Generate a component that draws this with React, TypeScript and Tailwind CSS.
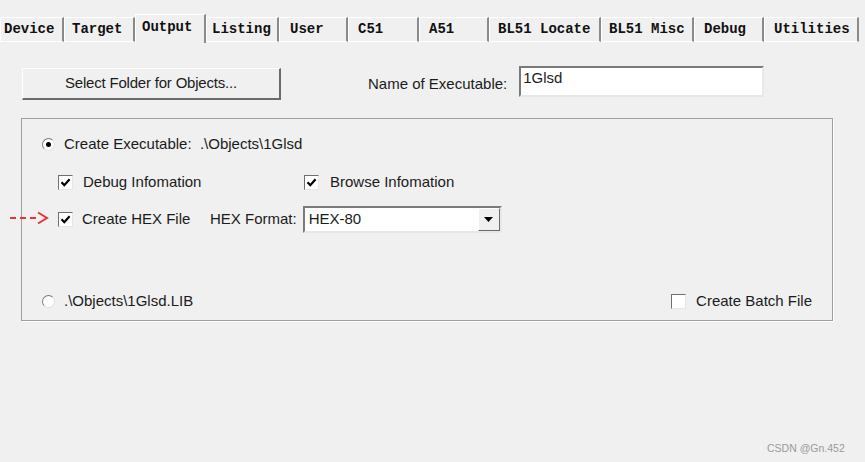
const TABS: Array<{ label: string; w: string; pl: string; active?: boolean }> = [
  { label: 'Device', w: 'w-[64px]', pl: 'pl-[3px]' },
  { label: 'Target', w: 'w-[71px]', pl: 'pl-[7px]' },
  { label: 'Output', w: 'w-[71px]', pl: 'pl-[6px]', active: true },
  { label: 'Listing', w: 'w-[73px]', pl: 'pl-[5px]' },
  { label: 'User', w: 'w-[69px]', pl: 'pl-[10px]' },
  { label: 'C51', w: 'w-[71px]', pl: 'pl-[9px]' },
  { label: 'A51', w: 'w-[70px]', pl: 'pl-[9px]' },
  { label: 'BL51 Locate', w: 'w-[112px]', pl: 'pl-[8px]' },
  { label: 'BL51 Misc', w: 'w-[93px]', pl: 'pl-[7px]' },
  { label: 'Debug', w: 'w-[70px]', pl: 'pl-[9px]' },
  { label: 'Utilities', w: 'w-[95px]', pl: 'pl-[9px]' },
];

function CheckBox({ checked }: { checked: boolean }) {
  return (
    <span className="w-[15px] h-[15px] shrink-0 bg-white border border-t-[#6e6e6e] border-l-[#6e6e6e] border-r-[#e6e6e6] border-b-[#e6e6e6] flex items-center justify-center">
      {checked && (
        <svg width="11" height="11" viewBox="0 0 11 11">
          <path d="M1.5 5.2 L4.3 8.2 L9.6 2.2" fill="none" stroke="#000" strokeWidth={2.2} />
        </svg>
      )}
    </span>
  );
}

function Radio({ checked }: { checked: boolean }) {
  return (
    <span className="w-[13px] h-[13px] shrink-0 rounded-full bg-white border border-t-[#7a7a7a] border-l-[#7a7a7a] border-r-[#e0e0e0] border-b-[#e0e0e0] flex items-center justify-center">
      {checked && <span className="w-[5px] h-[5px] rounded-full bg-black" />}
    </span>
  );
}

export default function App() {
  return (
    <div
      className="relative w-[865px] h-[462px] overflow-hidden bg-[#f0f0f0] text-[15px] text-[#1b1b1b]"
      style={{ fontFamily: '"Liberation Sans", Arial, sans-serif' }}
    >
      {/* Tab strip */}
      <div className="flex items-end h-[42px] pt-[13px]">
        {TABS.map((t) =>
          t.active ? (
            <div
              key={t.label}
              className={`${t.w} ${t.pl} h-[29px] -mb-[1px] pb-[3px] flex items-center bg-[#f0f0f0] border-t border-l border-white border-r-2 border-r-[#8a8a8a] font-bold text-[14px] text-[#111]`}
              style={{ fontFamily: '"Liberation Mono", "Courier New", monospace' }}
            >
              {t.label}
            </div>
          ) : (
            <div
              key={t.label}
              className={`${t.w} ${t.pl} h-[25px] flex items-center bg-[#f0f0f0] border-t border-l border-white border-r-2 border-r-[#8a8a8a] border-b border-b-white font-bold text-[14px] text-[#111]`}
              style={{ fontFamily: '"Liberation Mono", "Courier New", monospace' }}
            >
              {t.label}
            </div>
          ),
        )}
      </div>

      {/* Folder button and executable name */}
      <div className="flex items-start ml-[22px] mt-[26px]">
        <button className="w-[259px] h-[32px] bg-[#f0f0f0] border border-t-white border-l-white border-r-2 border-b-2 border-r-[#6b6b6b] border-b-[#6b6b6b] flex items-center justify-center text-[15px] tracking-[-0.2px]">
          Select Folder for Objects...
        </button>
        <span className="ml-[87px] mt-[5px] whitespace-nowrap">Name of Executable:</span>
        <div className="ml-[12px] -mt-[2px] w-[245px] h-[31px] bg-white border-2 border-t-[#7a7a7a] border-l-[#7a7a7a] border-r-[#e8e8e8] border-b-[#e8e8e8] pl-[2px] pt-[1px] leading-[18px]">
          1Glsd
        </div>
      </div>

      {/* Group box */}
      <div className="ml-[21px] mt-[18px] w-[812px] h-[203px] border border-[#a0a0a0] shadow-[1px_1px_0_#ffffff] pt-[15px]">
        <div className="flex items-center h-[20px] pl-[20px]">
          <Radio checked />
          <span className="ml-[9px] whitespace-nowrap">Create Executable:&nbsp; .\Objects\1Glsd</span>
        </div>

        <div className="flex items-center h-[20px] mt-[18px] pl-[36px]">
          <CheckBox checked />
          <span className="ml-[10px] w-[221px]">Debug Infomation</span>
          <CheckBox checked />
          <span className="ml-[11px]">Browse Infomation</span>
        </div>

        <div className="flex items-center h-[27px] mt-[14px] pl-[36px]">
          <CheckBox checked />
          <span className="ml-[9px] w-[128px] whitespace-nowrap">Create HEX File</span>
          <span className="whitespace-nowrap">HEX Format:</span>
          <div className="ml-[6px] w-[199px] h-[27px] bg-white border-2 border-t-[#7a7a7a] border-l-[#7a7a7a] border-r-[#e8e8e8] border-b-[#e8e8e8] flex items-stretch">
            <span className="flex-1 pl-[4px] flex items-center">HEX-80</span>
            <span className="w-[22px] bg-[#f0f0f0] border border-t-white border-l-white border-r-[#6b6b6b] border-b-[#6b6b6b] flex items-center justify-center">
              <svg width="9" height="5" viewBox="0 0 9 5">
                <path d="M0 0 H9 L4.5 5 Z" fill="#000" />
              </svg>
            </span>
          </div>
        </div>

        <div className="flex items-center h-[20px] mt-[58px] pl-[20px]">
          <Radio checked={false} />
          <span className="ml-[9px] whitespace-nowrap">.\Objects\1Glsd.LIB</span>
          <div className="ml-auto mr-[20px] flex items-center">
            <CheckBox checked={false} />
            <span className="ml-[10px] whitespace-nowrap">Create Batch File</span>
          </div>
        </div>
      </div>

      {/* Red annotation arrow */}
      <svg className="absolute left-[10px] top-[211px]" width="40" height="14" viewBox="0 0 40 14">
        <path d="M0 7 H30" stroke="#e8323c" strokeWidth={2} strokeDasharray="6 4" />
        <path d="M28 1.5 L37 7 L28 12.5" fill="none" stroke="#e8323c" strokeWidth={2} />
      </svg>

      {/* Watermark */}
      <span className="absolute left-[767px] top-[441px] text-[10.5px] text-[#9a9a9a]">CSDN @Gn.452</span>
    </div>
  );
}
